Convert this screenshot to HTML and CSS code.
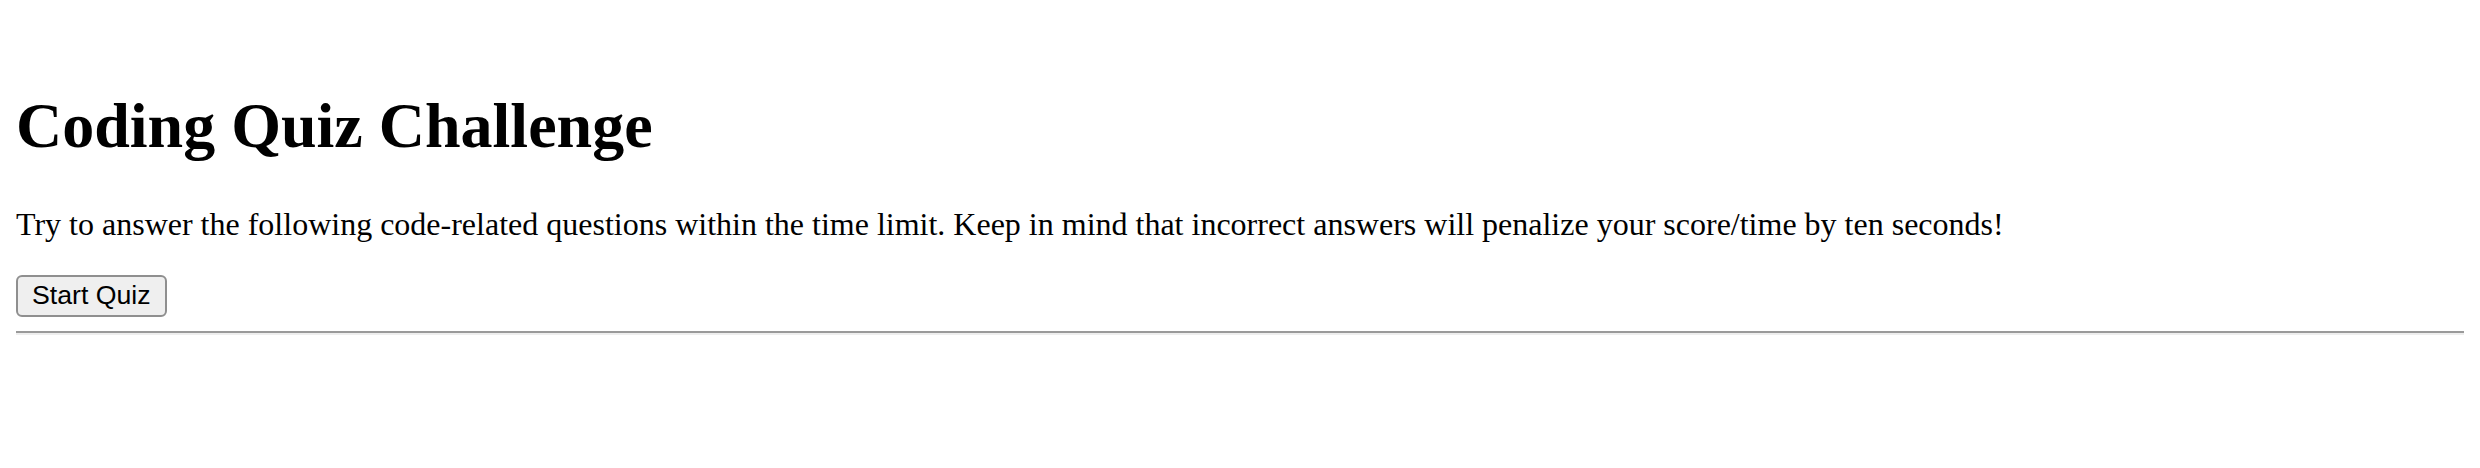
FILE: index.html
```html
<!DOCTYPE html>
<html lang="en">
<head>
<meta charset="utf-8">
<title>Coding Quiz Challenge</title>
<link rel="stylesheet" href="styles.css">
</head>
<body>
<header class="topbar"></header>
<main class="intro">
  <h1 class="title">Coding Quiz Challenge</h1>
  <p class="lead">Try to answer the following code-related questions within the time limit. Keep in mind that incorrect answers will penalize your score/time by ten seconds!</p>
  <button class="start-btn" type="button">Start Quiz</button>
</main>
<hr class="divider">
</body>
</html>
```

FILE: styles.css
```css
html, body {
  background: #ffffff;
}
body {
  margin: 16px;
  font-family: "Liberation Serif", "Times New Roman", serif;
  color: #000;
}
.topbar {
  height: 30px;
}
.title {
  font-size: 64px;
  font-weight: bold;
  margin: 42.88px 0;
}
.lead {
  font-size: 32px;
  margin: 32px 0;
}
.start-btn {
  font-family: "Liberation Sans", Arial, sans-serif;
  font-size: 26.67px;
  padding: 3px 14px 4px;
  border: 2px solid #8f8f8f;
  border-radius: 6px;
  background: #efefef;
  color: #000;
}
.divider {
  margin: 14px 0 16px;
  border: none;
  border-top: 2px solid #9a9a9a;
  border-bottom: 2px solid #eeeeee;
  height: 0;
}
```
